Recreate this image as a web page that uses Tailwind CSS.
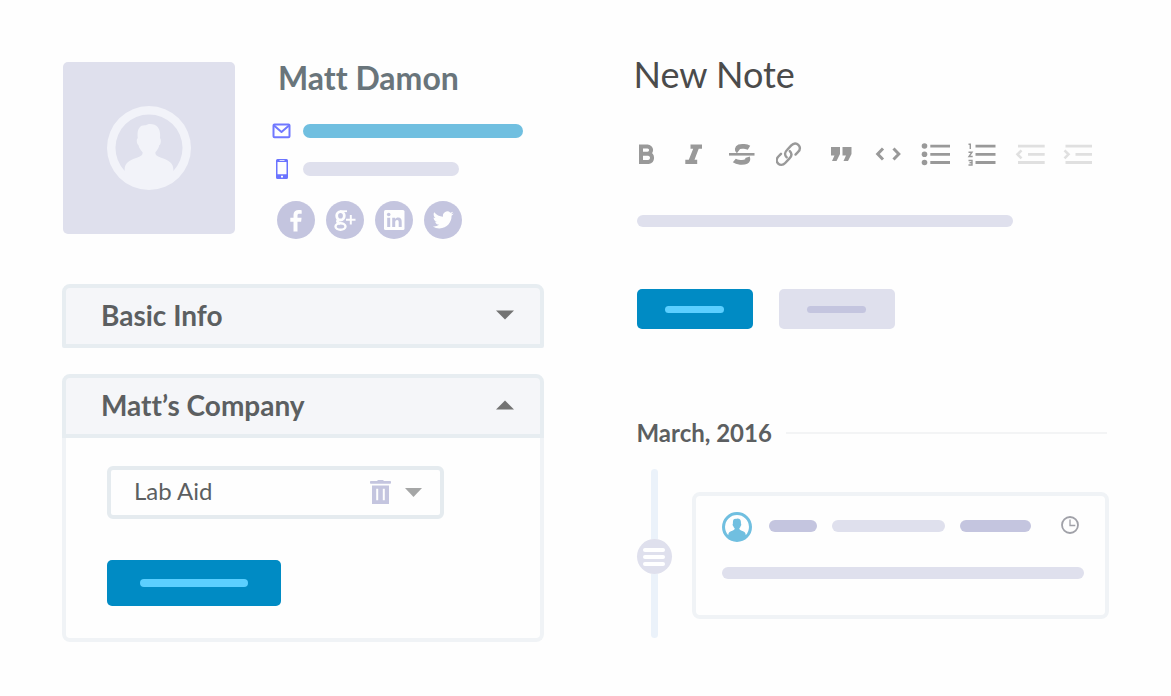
<!DOCTYPE html>
<html lang="en">
<head>
  <meta charset="UTF-8" />
  <meta name="viewport" content="width=device-width, initial-scale=1.0" />
  <title>Contact</title>
  <script src="https://cdn.jsdelivr.net/npm/@tailwindcss/browser@4"></script>
</head>
<body class="bg-[#fefefe] font-['Lato',sans-serif] text-[#5c5f61] [font-variant-ligatures:none]">
  <main class="grid grid-cols-[481fr_475fr] gap-x-[90px] px-[62px] pt-[62px] pb-12">

    <!-- Contact -->
    <section>
      <div class="flex items-start gap-[37px] pl-px">
        <div class="flex size-[172px] shrink-0 items-center justify-center rounded-[5px] bg-[#dfe0ed]">
          <svg class="size-[84px]" viewBox="0 0 84 84" fill="#f2f3f9">
            <path fill-rule="evenodd" d="M42 0a42 42 0 1 0 0 84a42 42 0 0 0 0-84zM66.300 65C67 57 62 54.500 53.500 51.500C50 50.200 48.300 49 48.300 46.500C51 43.500 51.800 41.500 52.200 39.300C54 38.500 54.500 33 52.900 32.300C54 24 51 18 43 18C41 18 40 18.600 39 19.300C33 18.500 29.500 23 30.800 32.300C29 33 29.800 38.500 31.500 39.300C32 41.500 33 43.500 35.700 46.500C35.700 49 34 50.200 30.500 51.500C22 54.500 17 57 17.700 65A33.500 33.500 0 1 1 66.300 65z" />
          </svg>
        </div>

        <div class="min-w-0 flex-1">
          <h1 class="pl-1.5 text-[32px] leading-8 font-bold text-[#69757b]">Matt Damon</h1>
          <div class="mt-[27px] flex h-5 items-center gap-3">
            <svg class="h-5 w-[19px] shrink-0" viewBox="0 0 19 20" fill="none" stroke="#7078ff" stroke-width="2" stroke-linejoin="round">
              <rect x="1.500" y="3.500" width="16" height="12.800" rx="1" />
              <path d="M2 4.500l7.500 6.500 7.500-6.500" />
            </svg>
            <div class="h-3.5 w-[220px] rounded-full bg-[#70bfe0]"></div>
          </div>
          <div class="mt-[18px] flex h-5 items-center gap-3">
            <svg class="h-5 w-[19px] shrink-0" viewBox="0 0 19 20" fill="#6b74ff">
              <path fill-rule="evenodd" d="M5.500 0h9a1.500 1.500 0 0 1 1.500 1.500v17a1.500 1.500 0 0 1-1.500 1.500h-9A1.500 1.500 0 0 1 4 18.500v-17A1.500 1.500 0 0 1 5.500 0zM5.500 3v12.300h9V3zM7.500 1.200v.7h5v-.7zM9 16.800v1.700h2v-1.700z" />
            </svg>
            <div class="h-3.5 w-[156px] rounded-full bg-[#dfe0ed]"></div>
          </div>
          <div class="mt-[22px] flex gap-[11px] pl-[5px]">
            <a href="#" aria-label="Facebook" class="size-[38px] rounded-full bg-[#c4c5df]">
              <svg class="size-[38px]" viewBox="0 0 38 38" fill="#fefefe">
                <path d="M20.500 30.500V20.800h3.600l.5-4h-4.100v-2.300c0-1.200.5-1.700 1.900-1.700h2.300V9.200c-.5-.1-1.700-.2-3-.2-3.200 0-5.200 1.800-5.200 5v2.800h-3.200v4h3.200v9.700z" />
              </svg>
            </a>
            <a href="#" aria-label="Google Plus" class="size-[38px] rounded-full bg-[#c4c5df]">
              <svg class="size-[38px]" viewBox="0 0 38 38" fill="none" stroke="#fefefe" stroke-width="2.800">
                <ellipse cx="14.500" cy="14.800" rx="3.800" ry="4.200" />
                <path d="M14 10.200h7" stroke-width="1.800" />
                <path d="M12.500 18.500c-2.500 2.500 0 3.200 2 4" stroke-width="2.800" />
                <ellipse cx="14.500" cy="25.500" rx="5" ry="3.200" stroke-width="2.400" />
                <path d="M20 18.800h9.500M24.800 14v9.500" stroke-width="2" />
              </svg>
            </a>
            <a href="#" aria-label="LinkedIn" class="size-[38px] rounded-full bg-[#c4c5df]">
              <svg class="size-[38px]" viewBox="0 0 38 38" fill="#c4c5df">
                <rect x="9" y="9" width="20.500" height="20" rx="1.500" fill="#fefefe" />
                <circle cx="13.700" cy="13.500" r="1.800" />
                <path d="M12.200 16.700h3V26h-3zM17.200 16.700h2.900V18c.6-1 1.700-1.600 3-1.600 2.800 0 3.600 1.800 3.600 4.400V26h-3v-4.700c0-1.300-.2-2.400-1.600-2.400s-1.900 1-1.900 2.300V26h-3z" />
              </svg>
            </a>
            <a href="#" aria-label="Twitter" class="size-[38px] rounded-full bg-[#c4c5df]">
              <svg class="size-[38px]" viewBox="0 0 38 38" fill="#fefefe">
                <path transform="translate(8.800 8.500) scale(.87)" d="M23.953 4.570a10 10 0 01-2.825.775 4.958 4.958 0 002.163-2.723c-.951.555-2.005.959-3.127 1.184a4.920 4.920 0 00-8.384 4.482C7.690 8.095 4.067 6.130 1.640 3.162a4.822 4.822 0 00-.666 2.475c0 1.710.87 3.213 2.188 4.096a4.904 4.904 0 01-2.228-.616v.06a4.923 4.923 0 003.946 4.827 4.996 4.996 0 01-2.212.085 4.936 4.936 0 004.604 3.417 9.867 9.867 0 01-6.102 2.105c-.39 0-.779-.023-1.170-.067a13.995 13.995 0 007.557 2.209c9.053 0 13.998-7.496 13.998-13.985 0-.21 0-.42-.015-.63A9.935 9.935 0 0024 4.590z" />
              </svg>
            </a>
          </div>
        </div>
      </div>

      <!-- Accordion -->
      <h2 class="mt-[45px]">
        <button type="button" aria-expanded="false" class="flex h-16 w-full items-center justify-between rounded-t-lg rounded-b-xs border-4 border-[#e7edf1] bg-[#f5f6f9] pr-[26px] pb-0.5 pl-[35px] text-[28px] leading-9 font-bold">
          Basic Info
          <svg class="h-2.5 w-[18px]" viewBox="0 0 18 10" fill="#737373"><path d="M0 .5h18l-9 9z" /></svg>
        </button>
      </h2>

      <h2 class="mt-[26px]">
        <button type="button" aria-expanded="true" class="flex h-16 w-full items-center justify-between rounded-t-lg border-4 border-[#e7edf1] bg-[#f5f6f9] pr-[26px] pb-0.5 pl-[35px] text-[28px] leading-9 font-bold">
          Matt’s Company
          <svg class="h-2.5 w-[18px]" viewBox="0 0 18 10" fill="#737373"><path d="M0 9.500h18l-9-9z" /></svg>
        </button>
      </h2>
      <div class="rounded-b-lg border-4 border-t-0 border-[#f0f3f6] px-[41px] pt-7 pb-8">
        <div class="flex h-[53px] max-w-[337px] items-center rounded-md border-4 border-[#e5ebef] pr-[18px] pl-[23px]">
          <select aria-label="Company" class="min-w-0 flex-1 appearance-none bg-transparent pb-1 text-[24px] leading-8 outline-none">
            <option>Lab Aid</option>
          </select>
          <button type="button" aria-label="Remove company" class="mr-3.5 shrink-0 pb-0.5">
            <svg class="h-6 w-[21px]" viewBox="0 0 21 24" fill="#c4c5df">
              <path d="M.8.900H7L8 0h5l1 .900h6.200a.8.800 0 0 1 .8.800V3a.8.800 0 0 1-.8.800H.8A.8.800 0 0 1 0 3V1.700a.8.800 0 0 1 .8-.8z" />
              <path fill-rule="evenodd" d="M2 5.500h17V24H2zM6.200 8.700v11.600h2V8.700zM12.800 8.700v11.600h2V8.700z" />
            </svg>
          </button>
          <svg class="h-[9px] w-[17px] shrink-0" viewBox="0 0 17 9" fill="#a5a6a6"><path d="M0 0h17L8.500 9z" /></svg>
        </div>
        <button type="button" aria-label="Save company" class="mt-[41px] flex h-[46px] w-[174px] items-center justify-center rounded-[5px] bg-[#008bc4]">
          <span class="h-2 w-[108px] rounded-full bg-[#5bcfff]"></span>
        </button>
      </div>
    </section>

    <!-- Notes -->
    <section>
      <h2 class="-mt-2 text-[36px] leading-10 text-[#4b4b4b]">New Note</h2>

      <div class="mt-11 flex items-center justify-between pr-4 text-[#999999]">
        <button type="button" aria-label="Bold">
          <svg class="size-8" viewBox="0 0 32 32" fill="none" stroke="currentColor" stroke-width="4">
            <path d="M7 8.500h6.500a3.500 3.500 0 0 1 0 7.200H7M7 15.700h7.500a4.200 4.200 0 0 1 0 8.300H7M7 6.500v19.500" />
          </svg>
        </button>
        <button type="button" aria-label="Italic">
          <svg class="size-8" viewBox="0 0 32 32" fill="currentColor">
            <path d="M9.500 6.500h11.500v4.200h-3.300l-4.200 11.100h2.700V26H4.300v-4.200h3.500L12.200 10.700H9.500z" />
          </svg>
        </button>
        <button type="button" aria-label="Strikethrough">
          <svg class="size-8 overflow-visible" viewBox="0 0 32 32" fill="none" stroke="currentColor">
            <path d="M0 16.300h25.500" stroke-width="2.600" />
            <path d="M20 9.800c-2.400-1.400-7.300-2-9.700-1-2.500 1-2.500 3.500-1 4.600" stroke-width="4.800" />
            <path d="M5.300 22.500c2.500 2 9.200 2.400 11.900 1 1.500-.8 1.900-2.500 1.300-4.300" stroke-width="4.800" />
          </svg>
        </button>
        <button type="button" aria-label="Link">
          <svg class="size-8" viewBox="0 0 32 32" fill="none" stroke="currentColor" stroke-width="2.400" stroke-linecap="round">
            <path d="M10.700 19.300c-2.500-2.500-2-5 .3-7.300l4.300-4.600c2.400-2.500 5.200-2.400 7-.6s2.200 4.600-.2 7.100l-2.600 2.700" />
            <path d="M13.800 13.100c2.500 2.500 2 5-.3 7.300L9.200 25c-2.400 2.500-5.200 2.400-7 .6S0 21 2.400 18.500L5 15.800" />
          </svg>
        </button>
        <button type="button" aria-label="Quote">
          <svg class="size-8" viewBox="0 0 32 32" fill="currentColor">
            <path d="M7 9h9v7l-3.500 7H8l2.500-5.500H7zM18.500 9h9v7L24 23h-4.500l2.500-5.500h-3.500z" />
          </svg>
        </button>
        <button type="button" aria-label="Code">
          <svg class="size-8" viewBox="0 0 32 32" fill="none" stroke="currentColor" stroke-width="3">
            <path d="M12 10.500L6.700 16l5.300 5.500M22.500 10.500l5.300 5.500-5.300 5.500" />
          </svg>
        </button>
        <button type="button" aria-label="Bulleted list">
          <svg class="size-8" viewBox="0 0 32 32" fill="currentColor">
            <circle cx="5.500" cy="8" r="2.800" /><circle cx="5.500" cy="16.300" r="2.800" /><circle cx="5.500" cy="24.500" r="2.800" />
            <path d="M11.300 6.700H31v2.800H11.300zM11.300 14.900H31v2.800H11.300zM11.300 23.100H31v2.800H11.300z" />
          </svg>
        </button>
        <button type="button" aria-label="Numbered list">
          <svg class="size-8" viewBox="0 0 32 32" fill="currentColor">
            <path d="M9.500 6.700H29.500v2.800H9.500zM9.500 14.900H29.500v2.800H9.500zM9.500 23.100H29.500v2.800H9.500z" />
            <path d="M2.500 6.300h1.800V11M2.500 14.200h3.500l-3 4.300h3.700M2.500 22.500h3.500v4.500H2.500M3.500 24.700H6" fill="none" stroke="currentColor" stroke-width="1.400" />
          </svg>
        </button>
        <button type="button" aria-label="Outdent" disabled class="text-[#e0e0e0]">
          <svg class="size-8" viewBox="0 0 32 32" fill="currentColor">
            <path d="M4 6.700H30.700v2.800H4zM14 14.900H30.700v2.800H14zM4 23.100H30.700v2.800H4z" />
            <path d="M7.500 12.300L3.500 16.300l4 4" fill="none" stroke="currentColor" stroke-width="2.600" />
          </svg>
        </button>
        <button type="button" aria-label="Indent" disabled class="text-[#e0e0e0]">
          <svg class="size-8" viewBox="0 0 32 32" fill="currentColor">
            <path d="M4.500 6.700H31v2.800H4.500zM14.500 14.900H31v2.800H14.500zM4.500 23.100H31v2.800H4.500z" />
            <path d="M3.500 12.300l4 4-4 4" fill="none" stroke="currentColor" stroke-width="2.600" />
          </svg>
        </button>
      </div>

      <div class="pl-[3px]">
        <div class="mt-[45px] h-3 max-w-[376px] rounded-full bg-[#dfe0ed]"></div>

        <div class="mt-[62px] flex gap-[26px]">
          <button type="button" aria-label="Save note" class="flex h-10 w-[116px] items-center justify-center rounded-[5px] bg-[#008bc4]">
            <span class="h-[7px] w-[59px] rounded-full bg-[#5bcfff]"></span>
          </button>
          <button type="button" aria-label="Cancel" class="flex h-10 w-[116px] items-center justify-center rounded-[5px] bg-[#dfe0ed]">
            <span class="h-[7px] w-[59px] rounded-full bg-[#c4c5df]"></span>
          </button>
        </div>

        <!-- Timeline -->
        <div class="mt-[88px] flex items-center gap-3.5">
          <h3 class="text-[24px] leading-8 font-bold">March, 2016</h3>
          <hr class="mr-0.5 flex-1 border-t-2 border-[#f3f4f5]" />
        </div>

        <div class="mt-5 flex gap-5">
          <div class="flex w-[35px] shrink-0 flex-col items-center">
            <div class="h-[70px] w-[7px] rounded-t-full bg-[#ebf2fa]"></div>
            <div class="flex size-[35px] flex-col items-center justify-center gap-[3px] rounded-full bg-[#dfe0ed]">
              <span class="h-1 w-[22px] rounded-full bg-white"></span>
              <span class="h-1 w-[22px] rounded-full bg-white"></span>
              <span class="h-1 w-[22px] rounded-full bg-white"></span>
            </div>
            <div class="w-[7px] flex-1 rounded-b-full bg-[#ebf2fa]"></div>
          </div>

          <article class="mt-[23px] mb-[19px] min-w-0 flex-1 rounded-lg border-4 border-[#f0f3f6] pt-4 pr-[21px] pb-9 pl-[26px]">
            <div class="flex items-center">
              <svg class="mr-[17px] size-[30px] shrink-0" viewBox="0 0 84 84" fill="#70bfe0">
                <path fill-rule="evenodd" d="M42 0a42 42 0 1 0 0 84a42 42 0 0 0 0-84zM66.300 65C67 57 62 54.500 53.500 51.500C50 50.200 48.300 49 48.300 46.500C51 43.500 51.800 41.500 52.200 39.300C54 38.500 54.500 33 52.900 32.300C54 24 51 18 43 18C41 18 40 18.600 39 19.300C33 18.500 29.500 23 30.800 32.300C29 33 29.800 38.500 31.500 39.300C32 41.500 33 43.500 35.700 46.500C35.700 49 34 50.200 30.500 51.500C22 54.500 17 57 17.700 65A33.500 33.500 0 1 1 66.300 65z" />
              </svg>
              <div class="flex flex-1 items-center gap-[15px] pb-0.5">
                <div class="h-3 w-12 rounded-full bg-[#c4c5df]"></div>
                <div class="h-3 w-[113px] rounded-full bg-[#dfe0ed]"></div>
                <div class="h-3 w-[71px] rounded-full bg-[#c4c5df]"></div>
              </div>
              <svg class="mr-[5px] mb-1 size-[18px] shrink-0" viewBox="0 0 18 18" fill="none" stroke="#a0a1a8" stroke-width="1.800">
                <circle cx="9" cy="9" r="8" />
                <path d="M9 3.500v6h5.300" stroke-width="1.300" />
              </svg>
            </div>
            <div class="mt-[25px] h-3 rounded-full bg-[#dfe0ed]"></div>
          </article>
        </div>
      </div>
    </section>
  </main>
</body>
</html>
